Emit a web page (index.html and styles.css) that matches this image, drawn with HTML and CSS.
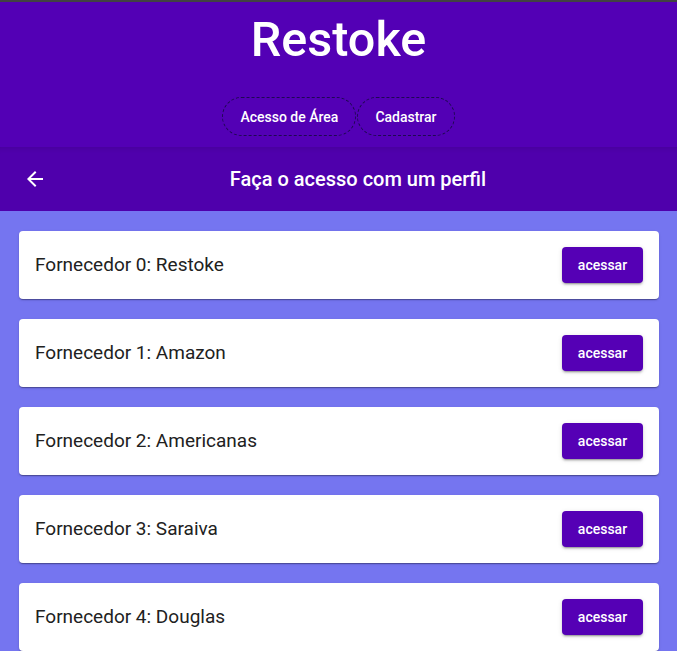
FILE: index.html
```html
<!DOCTYPE html>
<html lang="pt">
<head>
<meta charset="utf-8">
<title>Restoke</title>
<link rel="stylesheet" href="styles.css">
</head>
<body>
<div class="topline"></div>
<header class="header">
  <h1 class="brand">Restoke</h1>
  <nav class="pills">
    <a class="pill">Acesso de Área</a>
    <a class="pill">Cadastrar</a>
  </nav>
</header>
<div class="toolbar">
  <button class="icon-btn" aria-label="voltar">
    <svg width="24" height="24" viewBox="0 0 24 24"><path fill="#fff" d="M20 11H7.83l5.59-5.59L12 4l-8 8 8 8 1.41-1.41L7.83 13H20v-2z"/></svg>
  </button>
  <div class="toolbar-title">Faça o acesso com um perfil</div>
</div>
<main class="list">
  <div class="card"><span class="card-text">Fornecedor 0: Restoke</span><button class="btn">acessar</button></div>
  <div class="card"><span class="card-text">Fornecedor 1: Amazon</span><button class="btn">acessar</button></div>
  <div class="card"><span class="card-text">Fornecedor 2: Americanas</span><button class="btn">acessar</button></div>
  <div class="card"><span class="card-text">Fornecedor 3: Saraiva</span><button class="btn">acessar</button></div>
  <div class="card"><span class="card-text">Fornecedor 4: Douglas</span><button class="btn">acessar</button></div>
</main>
</body>
</html>
```
FILE: styles.css
```css
* { box-sizing: border-box; }
html, body {
  margin: 0;
  padding: 0;
  background: #7575f0;
  font-family: Roboto, "Noto Sans", sans-serif;
  height: 651px;
  overflow: hidden;
}
.topline {
  height: 2px;
  background: #424242;
}
.header {
  background: #5300b5;
  height: 145px;
  display: flex;
  flex-direction: column;
  align-items: center;
}
.brand {
  margin: 9px 0 0;
  font-size: 48.5px;
  line-height: 57px;
  font-weight: 500;
  color: #fff;
}
.pills {
  display: flex;
  gap: 1px;
  margin-top: 29px;
}
.pill {
  height: 39px;
  padding: 0 17px;
  border: 1px dashed rgba(25, 10, 70, 0.9);
  border-radius: 20px;
  display: flex;
  align-items: center;
  color: #fff;
  font-size: 14px;
  font-weight: 500;
}
.toolbar {
  background: #4f00ac;
  height: 64px;
  display: flex;
  align-items: center;
  padding: 0 16px 0 15px;
  box-shadow: inset 0 6px 6px -6px rgba(0,0,0,0.15);
}
.icon-btn {
  width: 40px;
  height: 40px;
  border: 0;
  padding: 0;
  background: transparent;
  display: flex;
  align-items: center;
  justify-content: center;
}
.toolbar-title {
  flex: 1;
  text-align: center;
  color: #fff;
  font-size: 20px;
  font-weight: 500;
}
.list {
  display: flex;
  flex-direction: column;
  gap: 20px;
  padding: 20px 18px 0 19px;
}
.card {
  background: #fff;
  border-radius: 4px;
  height: 68px;
  padding: 0 16px;
  display: flex;
  align-items: center;
  justify-content: space-between;
  box-shadow: 0 2px 1px -1px rgba(0,0,0,.2), 0 1px 1px 0 rgba(0,0,0,.14), 0 1px 3px 0 rgba(0,0,0,.12);
}
.card-text {
  font-size: 19px;
  line-height: 22px;
  margin-top: -1px;
  color: #212121;
}
.btn {
  width: 81px;
  height: 36px;
  border: 0;
  border-radius: 4px;
  background: #5500b5;
  color: #fff;
  font-family: Roboto, "Noto Sans", sans-serif;
  font-size: 14px;
  font-weight: 500;
  box-shadow: 0 3px 1px -2px rgba(0,0,0,.2), 0 2px 2px 0 rgba(0,0,0,.14), 0 1px 5px 0 rgba(0,0,0,.12);
}
```
